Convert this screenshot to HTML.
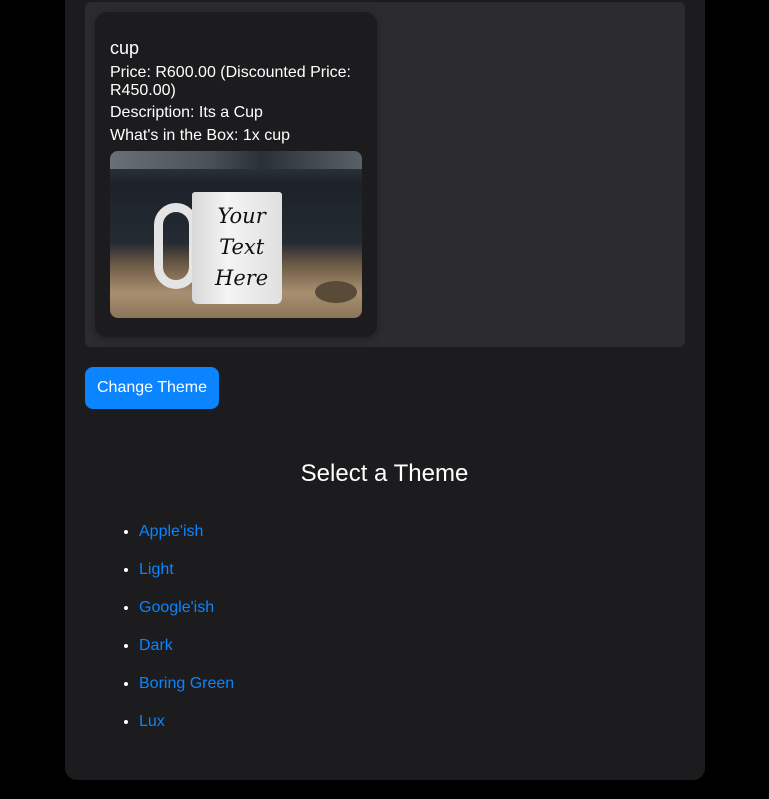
<!DOCTYPE html>
<html><head><style>
body{margin:0;background:#000;width:769px;height:799px;overflow:hidden;font-family:"Liberation Sans",sans-serif;color:#fff}
.wrap{position:absolute;left:65px;top:-20px;width:640px;height:800px;background:#1c1c1e;border-radius:12px}
.panel{position:absolute;left:85px;top:2px;width:600px;height:345px;background:#2c2c2e;border-radius:6px}
.card{position:absolute;left:95px;top:12px;width:282px;height:325px;background:#1c1c1e;border-radius:12px;box-shadow:0 2px 8px rgba(0,0,0,.3)}
.t{position:absolute;left:110px;font-size:16px;line-height:18px;white-space:nowrap}
.img{position:absolute;left:110px;top:151px;width:252px;height:167px;border-radius:8px;overflow:hidden;background:linear-gradient(#3a4048 0%,#1c2228 20%,#252b33 55%,#6d5a45 68%,#a88f70 85%,#8a7458 100%)}
.btn{position:absolute;left:85px;top:367px;width:134px;height:42px;background:#0a84ff;border-radius:8px;font-size:16px;line-height:42px;text-align:center}
h2{position:absolute;left:0;width:769px;top:460px;margin:0;text-align:center;font-weight:normal;font-size:24px}
ul{position:absolute;left:100px;top:522px;margin:0;padding-left:39px;font-size:16px;color:#0a84ff}
li{height:38px;line-height:20px}
li::marker{color:#fff}
</style></head><body>
<div class="wrap"></div>
<div class="panel"></div>
<div class="card"></div>
<div class="t" style="top:39px;font-size:18px">cup</div>
<div class="t" style="top:64px">Price: R600.00 (Discounted Price:<br>R450.00)</div>
<div class="t" style="top:104px">Description: Its a Cup</div>
<div class="t" style="top:127px">What's in the Box: 1x cup</div>
<div class="img">
<div style="position:absolute;left:0;top:0;width:252px;height:18px;background:linear-gradient(90deg,#6a7078,#4a5058 40%,#2a3038 60%,#5a6068)"></div>
<div style="position:absolute;left:44px;top:52px;width:44px;height:86px;border:9px solid #e4e4e4;border-radius:22px;box-sizing:border-box"></div>
<div style="position:absolute;left:82px;top:41px;width:90px;height:112px;background:linear-gradient(90deg,#d8d8d8,#f4f4f4 40%,#e0e0e0);border-radius:3px 3px 6px 6px"></div>
<div style="position:absolute;left:105px;top:50px;font-family:'DejaVu Serif',serif;font-style:italic;color:#111;font-size:21px;line-height:31px;text-align:center">Your<br>Text<br>Here</div>
<div style="position:absolute;left:205px;top:130px;width:42px;height:22px;background:#5a4a38;border-radius:50%"></div>
</div>
<div class="btn">Change Theme</div>
<h2>Select a Theme</h2>
<ul><li>Apple'ish</li><li>Light</li><li>Google'ish</li><li>Dark</li><li>Boring Green</li><li>Lux</li></ul>
</body></html>
